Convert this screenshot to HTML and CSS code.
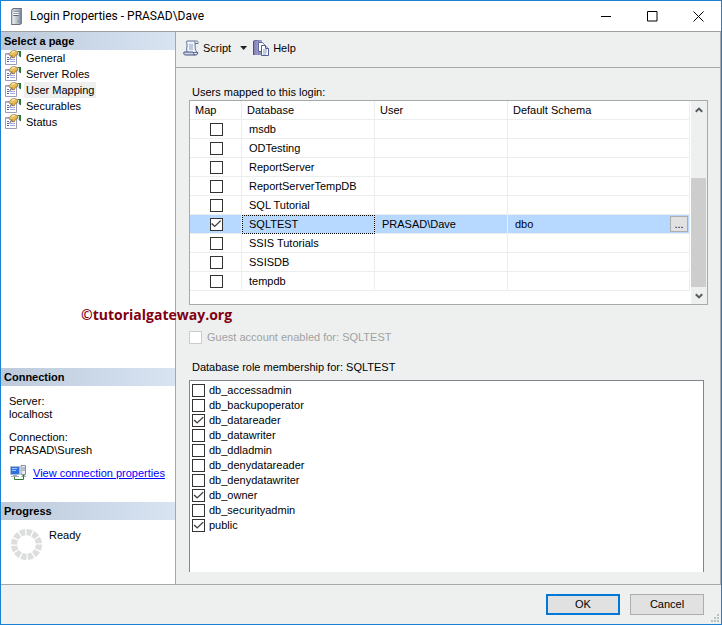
FILE: index.html
```html
<!DOCTYPE html>
<html lang="en">
<head>
<meta charset="utf-8">
<title>Login Properties - PRASAD\Dave</title>
<link rel="stylesheet" href="styles.css">
</head>
<body>
<svg class="defs" aria-hidden="true">
  <defs>
    <linearGradient id="gold" x1="0" y1="0" x2="1" y2="1"><stop offset="0" stop-color="#ffe08a"/><stop offset="1" stop-color="#e09a18"/></linearGradient>
    <linearGradient id="metal" x1="0" x2="1"><stop offset="0" stop-color="#f4f6fa"/><stop offset="1" stop-color="#8d97a6"/></linearGradient>
    <linearGradient id="purple" x1="0" x2="1"><stop offset="0" stop-color="#4d4a86"/><stop offset="1" stop-color="#a9a7d6"/></linearGradient>
    <symbol id="page" viewBox="0 0 16 16">
      <path d="M.5 3.500H11.500V14.500H.5z" fill="#fff" stroke="#9a9db5"/>
      <path d="M1 4h6v1H1z" fill="#b9bbe0"/>
      <path d="M2 7h2v1H2zM2 9h2v1H2zM2 11h2v1H2z" fill="#5a62b0"/>
      <path d="M5 7h5v1H5zM5 9h5v1H5zM5 11h5v1H5z" fill="#a3a7d2"/>
      <path d="M13 1h3v6h-1l-2-2z" fill="#2f7a3c"/>
      <path d="M12 2l2 0v4l-2-1z" fill="#d7dce8"/>
      <path d="M4 4.500l2.500-3.500 3-.6 3 1.100v3l-2 .8-1 2.200-2 .3-.8-2.300-1.700.5z" fill="url(#gold)" stroke="#7a6238" stroke-width=".6"/>
      <path d="M7 5.500l-2.500 4" stroke="#6a6a70"/>
      <path d="M7 2l3-.5" stroke="#fff3c0"/>
    </symbol>
  </defs>
</svg>
<div class="window">
  <header class="titlebar">
    <svg class="server" viewBox="0 0 10 16" aria-hidden="true"><path d="M.5 2L2 .5h7.500v14L8 15.500H.5z" fill="url(#metal)" stroke="#667080"/><path d="M2 3h5M2 5h5M2 7h5" stroke="#59667c"/><path d="M2 4h5M2 6h5" stroke="#fff"/><path d="M6 12h1v1H6z" fill="#3a8a3a"/><path d="M8.500 2v12" stroke="#7b8698"/></svg>
    <h1>Login Properties - PRASAD\Dave</h1>
    <div class="winbtns">
      <button type="button" aria-label="Minimize"><svg viewBox="0 0 11 11"><path d="M0 5.500h10"/></svg></button>
      <button type="button" aria-label="Maximize"><svg viewBox="0 0 11 11"><path d="M.5 .5h9.500v9.500H.5z"/></svg></button>
      <button type="button" aria-label="Close"><svg viewBox="0 0 11 11"><path d="M.5 .5l10 10M10.500 .5l-10 10"/></svg></button>
    </div>
  </header>
  <div class="body">
    <aside class="sidebar">
      <h2>Select a page</h2>
      <nav>
        <a href="#"><svg><use href="#page"/></svg><span>General</span></a>
        <a href="#"><svg><use href="#page"/></svg><span>Server Roles</span></a>
        <a href="#" aria-current="page"><svg><use href="#page"/></svg><span>User Mapping</span></a>
        <a href="#"><svg><use href="#page"/></svg><span>Securables</span></a>
        <a href="#"><svg><use href="#page"/></svg><span>Status</span></a>
      </nav>
      <section class="connection">
        <h2>Connection</h2>
        <dl>
          <dt>Server:</dt><dd>localhost</dd>
          <dt>Connection:</dt><dd>PRASAD\Suresh</dd>
        </dl>
        <div class="viewlink">
          <svg viewBox="0 0 16 16" aria-hidden="true"><path d="M.5 1.500h9v8h-9z" fill="#2e6fe0" stroke="#a9bbd8"/><path d="M2 3h5v1H2zM2 5h4v1H2z" fill="#9cc8ff"/><path d="M3 10h4v1H3zM1 11h8v1H1z" fill="#a4adbd"/><path d="M11 .5h4.500v9H11z" fill="#e6eaf2" stroke="#8791a4"/><path d="M12 3h3M12 5h3" stroke="#8791a4"/><path d="M4.500 12v2.500h9V10M11.500 12l2-2 2 2" fill="none" stroke="#2c7d2c"/></svg>
          <a href="#">View connection properties</a>
        </div>
      </section>
      <section class="progress">
        <h2>Progress</h2>
        <div class="state">
          <svg viewBox="0 0 30 30" aria-hidden="true"><circle cx="15" cy="15" r="12" pathLength="120"/></svg>
          <span>Ready</span>
        </div>
      </section>
    </aside>
    <main>
      <div class="toolbar">
        <button type="button"><svg viewBox="0 0 16 16" aria-hidden="true"><path d="M4 1h9.500c1.500 0 2 1 1.500 2.500h-3c.5 4-.5 6 2 9H4.500c-2-3 0-6-.5-8.500C3.700 2.500 2.500 2.500 4 1z" fill="#eef2fa" stroke="#5f6f93"/><path d="M6 5h4M6 7h4M6 9h4" stroke="#8d9dc2"/><path d="M1 12h9c1 0 0 3 2 3H2.500C.5 15 .5 13 1 12zM12 15c2.500 0 3-1 2.500-3" fill="#c8d2e6" stroke="#44557c"/><path d="M12 3.500V1.500" stroke="#5f6f93"/></svg>Script<i class="caret"></i></button>
        <button type="button"><svg viewBox="0 0 16 16" aria-hidden="true"><path d="M0 1l2-1h7v15H0z" fill="url(#purple)"/><path d="M2 1v14M4 1v14" stroke="#d1d0ee" stroke-width=".7"/><path d="M5.500 2.500h4l2 2v7h-6z" fill="#fff" stroke="#5d6aa0"/><path d="M8.500 5.500h4l3 3v7h-7z" fill="#fff" stroke="#4c5c96"/><path d="M12.500 5.500v3h3" fill="#c9d2ec" stroke="#4c5c96"/><path d="M10 10h4M10 12h4M10 14h3" stroke="#8797c4"/></svg>Help</button>
      </div>
      <div class="content">
        <p class="caption" id="mapcap">Users mapped to this login:</p>
        <div class="gridbox">
          <table aria-labelledby="mapcap">
            <thead><tr><th class="c-map">Map</th><th class="c-db">Database</th><th class="c-user">User</th><th>Default Schema</th></tr></thead>
            <tbody>
              <tr><td><input type="checkbox" aria-label="Map msdb"></td><td>msdb</td><td></td><td></td></tr>
              <tr><td><input type="checkbox" aria-label="Map ODTesting"></td><td>ODTesting</td><td></td><td></td></tr>
              <tr><td><input type="checkbox" aria-label="Map ReportServer"></td><td>ReportServer</td><td></td><td></td></tr>
              <tr><td><input type="checkbox" aria-label="Map ReportServerTempDB"></td><td>ReportServerTempDB</td><td></td><td></td></tr>
              <tr><td><input type="checkbox" aria-label="Map SQL Tutorial"></td><td>SQL Tutorial</td><td></td><td></td></tr>
              <tr class="selected"><td><input type="checkbox" checked aria-label="Map SQLTEST"></td><td class="focus">SQLTEST</td><td>PRASAD\Dave</td><td><div class="schema">dbo<button type="button" aria-label="Browse schema">...</button></div></td></tr>
              <tr><td><input type="checkbox" aria-label="Map SSIS Tutorials"></td><td>SSIS Tutorials</td><td></td><td></td></tr>
              <tr><td><input type="checkbox" aria-label="Map SSISDB"></td><td>SSISDB</td><td></td><td></td></tr>
              <tr><td><input type="checkbox" aria-label="Map tempdb"></td><td>tempdb</td><td></td><td></td></tr>
            </tbody>
          </table>
          <div class="scrollbar">
            <svg viewBox="0 0 8 6" aria-hidden="true"><path d="M.8 4.800L4 1.600l3.200 3.200"/></svg>
            <div class="thumb"></div>
            <svg viewBox="0 0 8 6" aria-hidden="true"><path d="M.8 1.200L4 4.400l3.200-3.200"/></svg>
          </div>
        </div>
        <label class="guest"><input type="checkbox" disabled>Guest account enabled for: SQLTEST</label>
        <p class="caption">Database role membership for: SQLTEST</p>
        <div class="roles">
          <label><input type="checkbox">db_accessadmin</label>
          <label><input type="checkbox">db_backupoperator</label>
          <label><input type="checkbox" checked>db_datareader</label>
          <label><input type="checkbox">db_datawriter</label>
          <label><input type="checkbox">db_ddladmin</label>
          <label><input type="checkbox">db_denydatareader</label>
          <label><input type="checkbox">db_denydatawriter</label>
          <label><input type="checkbox" checked>db_owner</label>
          <label><input type="checkbox">db_securityadmin</label>
          <label><input type="checkbox" checked>public</label>
        </div>
      </div>
    </main>
    <div class="watermark">©tutorialgateway.org</div>
  </div>
  <footer>
    <button type="button" class="default">OK</button>
    <button type="button">Cancel</button>
    <svg class="grip" viewBox="0 0 8 8" aria-hidden="true"><path d="M6 0h2v2H6zM3 3h2v2H3zM6 3h2v2H6zM0 6h2v2H0zM3 6h2v2H3zM6 6h2v2H6z"/></svg>
  </footer>
</div>
</body>
</html>
```
FILE: styles.css
```css
* { box-sizing: border-box; margin: 0; padding: 0; }
body { font: 11px/13px "Liberation Sans", Arial, sans-serif; color: #000; }
button, input { font: inherit; color: inherit; }
button { border: 0; background: none; }
svg { display: block; flex: none; }
.defs { position: absolute; width: 0; height: 0; }

.window { display: flex; flex-direction: column; min-height: 100vh; border: 1px solid #1a80d4; background: #eef0f0; }

.titlebar { display: flex; align-items: center; height: 31px; padding-left: 10px; background: #fff; border-bottom: 1px solid #a0a0a0; }
.server { width: 11px; height: 17px; margin-right: 8px; }
.titlebar h1 { flex: 1; font: 12px/16px Roboto, "Open Sans", sans-serif; }
.winbtns { display: flex; }
.winbtns button { display: flex; align-items: center; justify-content: center; width: 46px; height: 30px; }
.winbtns svg { width: 11px; height: 11px; fill: none; stroke: #000; }

.body { position: relative; display: flex; flex: 1; border-bottom: 1px solid #a5a9ac; }

.sidebar { display: flex; flex-direction: column; width: 175px; flex: none; background: #fff; border-right: 1px solid #a5a9ac; }
.sidebar h2 { height: 18px; padding-left: 3px; font: bold 11px/18px "Liberation Sans", Arial, sans-serif; background: linear-gradient(90deg, #bccadb, #d8e4f2); }
nav { flex: 1; }
nav a { display: flex; align-items: center; height: 16px; gap: 3px; padding-left: 4px; color: #000; text-decoration: none; }
nav svg { width: 16px; height: 16px; }
nav span { padding: 0 2px; line-height: 16px; }
nav a[aria-current] span { background: #eef0f0; }
.connection { height: 134px; }
.connection dl { padding: 9px 0 0 8px; }
.connection dd { margin-bottom: 10px; }
.connection dd:last-child { margin-bottom: 8px; }
.viewlink { display: flex; align-items: center; gap: 7px; padding-left: 9px; }
.viewlink svg { width: 16px; height: 16px; }
.viewlink a { color: #00f; }
.progress { height: 82px; }
.state { display: flex; gap: 7px; padding: 9px 0 0 10px; }
.state svg { width: 31px; height: 31px; }
.state circle { fill: none; stroke: #dcdddd; stroke-width: 6; stroke-dasharray: 8 2; }

main { display: flex; flex: 1; flex-direction: column; min-width: 0; border-right: 1px solid #a5a9ac; }
.toolbar { display: flex; height: 36px; align-items: center; gap: 6px; padding: 0 0 3px 7px; border-bottom: 1px solid #a5a9ac; }
.toolbar button { display: flex; align-items: center; gap: 4px; }
.toolbar svg { width: 16px; height: 16px; }
.caret { width: 7px; height: 4px; margin-left: 5px; background: #222; clip-path: polygon(0 0, 100% 0, 50% 100%); }

.content { display: flex; flex: 1; flex-direction: column; padding: 17px 12px 12px 13px; }
.caption { padding-left: 3px; line-height: 15px; }
.gridbox { display: flex; height: 205px; border: 1px solid #a5a9ac; background: #fff; }
table { flex: 1; align-self: flex-start; margin-right: 1px; table-layout: fixed; border-collapse: separate; border-spacing: 0; }
th, td { height: 19px; border-right: 1px solid #eceeee; border-bottom: 1px solid #eceeee; text-align: left; font-weight: normal; line-height: 17px; }
th { padding-left: 5px; }
td { padding-left: 7px; }
td:first-child { padding: 0 0 0 1px; text-align: center; }
.c-map { width: 52px; }
.c-db, .c-user { width: 133px; }
input[type="checkbox"] { display: block; position: relative; flex: none; width: 13px; height: 13px; margin: 0; appearance: none; border: 1px solid #333; background: #fff; }
input[type="checkbox"]:checked::before { content: ""; position: absolute; inset: 1px 0; background: #444; clip-path: polygon(5% 50%, 16% 40%, 38% 66%, 88% 8%, 98% 18%, 38% 86%); }
input[type="checkbox"]:disabled { border-color: #ccc; }
td input[type="checkbox"] { margin: 0 auto; }
.selected td { background: #b8d9ff; }
.selected .focus { outline: 1px dotted #000; outline-offset: -1px; }
.schema { display: flex; align-items: center; justify-content: space-between; height: 18px; padding-right: 1px; }
.schema button { width: 18px; height: 16px; line-height: 13px; border: 1px solid #adadad; background: #e1e1e1; }
.scrollbar { display: flex; flex-direction: column; align-items: center; width: 16px; padding: 6px 1px 5px 0; background: #eef0f0; }
.scrollbar svg { width: 8px; height: 6px; fill: none; stroke: #555a60; stroke-width: 2; }
.thumb { align-self: stretch; flex: 1; margin: 65px 0 6px; background: #cdcdcd; }
.guest { display: flex; align-items: center; gap: 5px; margin: 26px 0 16px; color: #a0a2a2; }
.roles { flex: 1; margin-right: 4px; margin-top: 5px; padding: 2px; border: 1px solid #82868c; border-bottom: 0; background: #fff; }
.roles label { display: flex; align-items: center; gap: 4px; height: 15px; }

.watermark { position: absolute; left: 80px; top: 274px; font: bold 14px/18px "Open Sans", "Noto Sans", sans-serif; color: #800012; }

footer { position: relative; display: flex; align-items: center; justify-content: flex-end; gap: 10px; height: 39px; padding-right: 17px; }
footer button { width: 74px; height: 21px; border: 1px solid #adadad; background: #e1e1e1; }
footer .default { border: 2px solid #0078d7; }
.grip { position: absolute; right: 2px; bottom: 2px; width: 8px; height: 8px; fill: #b7c4bf; }
```
